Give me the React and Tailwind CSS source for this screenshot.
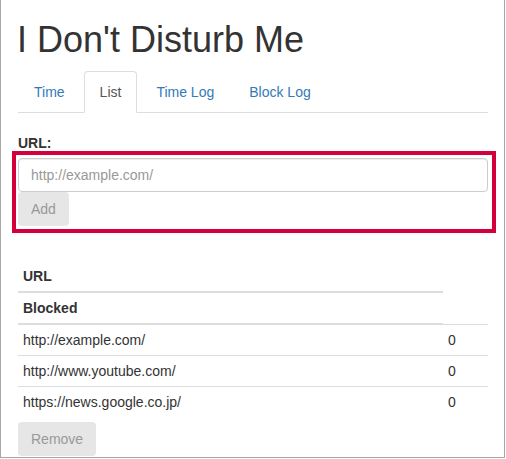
const tabs = ["Time", "List", "Time Log", "Block Log"];

const rows = [
  { url: "http://example.com/", count: 0 },
  { url: "http://www.youtube.com/", count: 0 },
  { url: "https://news.google.co.jp/", count: 0 },
];

export default function App() {
  return (
    <div
      className="w-[506px] h-[459px] bg-white text-[14px] leading-[20px] text-[#333]"
      style={{ fontFamily: '"Liberation Sans", Arial, sans-serif' }}
    >
      <div className="w-[505px] h-[458px] border-l border-r border-b border-[#a8a8a8] pl-[17px] pr-[16px]">
        <h1 className="pt-[20px] text-[36px] leading-[40px] font-normal text-[#333] -ml-[1px]">
          I Don't Disturb Me
        </h1>

        {/* tabs */}
        <ul className="mt-[11px] flex border-b border-[#ddd]">
          {tabs.map((t) => {
            const active = t === "List";
            return (
              <li key={t} className="mr-[3px] -mb-px">
                <a
                  className={
                    active
                      ? "block px-[15px] py-[10px] border border-[#ddd] border-b-white rounded-t-[4px] bg-white text-[#555]"
                      : "block px-[15px] py-[10px] border border-transparent text-[#337ab7]"
                  }
                >
                  {t}
                </a>
              </li>
            );
          })}
        </ul>

        {/* form */}
        <div className="mt-[20px]">
          <label className="block font-bold mb-[5px]">URL:</label>
          <div className="relative">
            <input
              className="block w-full h-[34px] px-[12px] border border-[#ccc] rounded-[4px] shadow-[inset_0_1px_1px_rgba(0,0,0,0.075)] outline-none placeholder:text-[#999]"
              placeholder="http://example.com/"
            />
            <button className="block h-[34px] px-[13px] bg-[#e6e6e6] text-[#999] rounded-[4px]">
              Add
            </button>
            <div className="pointer-events-none absolute -left-[6px] -top-[7px] -right-[8px] -bottom-[7px] border-4 border-[#d4003c]" />
          </div>
        </div>

        {/* table */}
        <div className="mt-[35px]">
          <div className="w-[425px] p-[5px] border-b-2 border-[#ddd] font-bold">URL</div>
          <div className="w-[425px] p-[5px] border-b-2 border-[#ddd] font-bold">Blocked</div>
          {rows.map((r, i) => (
            <div
              key={r.url}
              className={
                i === 0
                  ? "flex -mt-px border-t border-[#ddd]"
                  : "flex border-t border-[#ddd]"
              }
            >
              <div className="w-[425px] p-[5px]">{r.url}</div>
              <div className="flex-1 p-[5px]">{r.count}</div>
            </div>
          ))}
        </div>

        <button className="mt-[5px] block h-[34px] px-[13px] bg-[#e6e6e6] text-[#999] rounded-[4px]">
          Remove
        </button>
      </div>
    </div>
  );
}
